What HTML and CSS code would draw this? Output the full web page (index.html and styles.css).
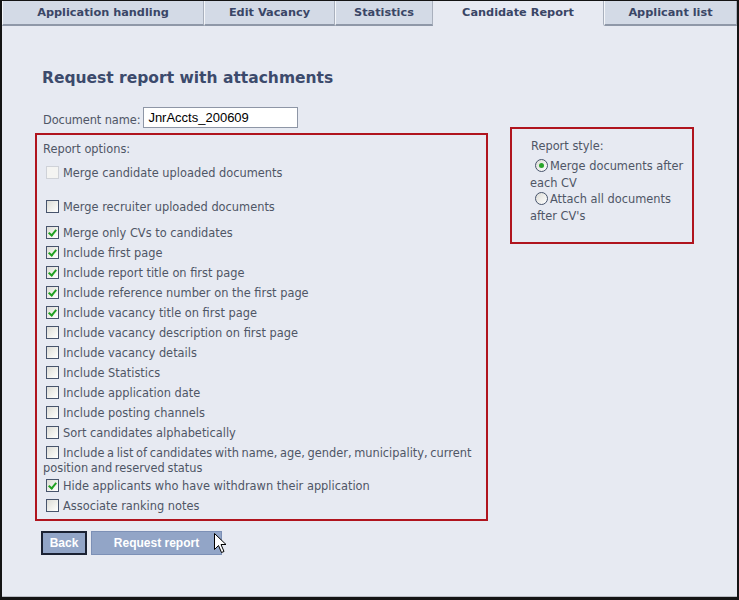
FILE: index.html
```html
<!DOCTYPE html>
<html>
<head>
<meta charset="utf-8">
<link rel="stylesheet" href="styles.css">
</head>
<body>
<div class="frame">
  <div class="tabs">
    <div class="tab t1">Application handling</div>
    <div class="tab t2">Edit Vacancy</div>
    <div class="tab t3">Statistics</div>
    <div class="tab t4 active">Candidate Report</div>
    <div class="tab t5">Applicant list</div>
  </div>
  <div class="content">
    <h1 class="title">Request report with attachments</h1>
    <div class="docrow">
      <span class="doclabel">Document name:</span>
      <span class="input">JnrAccts_200609</span>
    </div>
    <div class="panels">
      <div class="box options">
        <div class="boxlabel">Report options:</div>
        <div class="opt first"><span class="cb disabled"></span>Merge candidate uploaded documents</div>
        <div class="opt second"><span class="cb"></span>Merge recruiter uploaded documents</div>
        <div class="opt"><span class="cb on"></span>Merge only CVs to candidates</div>
        <div class="opt"><span class="cb on"></span>Include first page</div>
        <div class="opt"><span class="cb on"></span>Include report title on first page</div>
        <div class="opt"><span class="cb on"></span>Include reference number on the first page</div>
        <div class="opt"><span class="cb on"></span>Include vacancy title on first page</div>
        <div class="opt"><span class="cb"></span>Include vacancy description on first page</div>
        <div class="opt"><span class="cb"></span>Include vacancy details</div>
        <div class="opt"><span class="cb"></span>Include Statistics</div>
        <div class="opt"><span class="cb"></span>Include application date</div>
        <div class="opt"><span class="cb"></span>Include posting channels</div>
        <div class="opt"><span class="cb"></span>Sort candidates alphabetically</div>
        <div class="opt wrap"><span class="cb"></span>Include a list of candidates with name, age, gender, municipality, current position and reserved status</div>
        <div class="opt"><span class="cb on"></span>Hide applicants who have withdrawn their application</div>
        <div class="opt"><span class="cb"></span>Associate ranking notes</div>
      </div>
      <div class="box style">
        <div class="stylelabel">Report style:</div>
        <div class="radiorow"><span class="rb on"></span>Merge documents after each CV</div>
        <div class="radiorow"><span class="rb"></span>Attach all documents after CV's</div>
      </div>
    </div>
    <div class="buttons">
      <span class="btn back">Back</span>
      <span class="btn req">Request report
        <svg class="cursor" width="13" height="21" viewBox="0 0 13 21"><path d="M0.5 0.5 L0.5 16.5 L4.5 12.5 L7.5 19.5 L10 18.5 L7 11.5 L12 11.5 Z" fill="#fff" stroke="#000" stroke-width="1"/></svg>
      </span>
    </div>
  </div>
</div>
</body>
</html>
```
FILE: styles.css
```css
html, body { margin: 0; padding: 0; }
body { background: #e7eaf2; }
.frame {
  box-sizing: border-box;
  width: 739px; height: 600px;
  border: 2px solid #141414;
  border-top-width: 1px;
  border-bottom-width: 3px;
  background: #e7eaf2;
  position: relative;
  overflow: hidden;
  font-family: "DejaVu Sans", Verdana, sans-serif;
}
.frame::after {
  content: ""; position: absolute; left: 0; right: 0; bottom: 0;
  height: 1px; background: #b9bcc4;
}
.tabs { display: flex; height: 25px; }
.tab {
  box-sizing: border-box;
  height: 25px;
  background: #d3dae6;
  border-bottom: 2px solid #8f98a8;
  border-right: 1px solid #a9b0bd;
  border-left: 1px solid #f4f6fa;
  color: #3a4666;
  font-weight: bold;
  font-size: 11.3px;
  line-height: 23px;
  text-align: center;
}
.t1 { width: 202px; }
.t2 { width: 131px; }
.t3 { width: 98px; }
.t4 { width: 171px; }
.t5 { width: 133px; }
.tab.active { background: #e7eaf2; border-bottom-color: transparent; border-left: none; border-right: 1px solid #a9b0bd; }
.content { padding: 41px 0 0 33px; }
.title {
  margin: 0;
  font-size: 15.5px; font-weight: bold;
  color: #3c4a6c;
  line-height: 22px;
  padding-left: 7px;
}
.docrow { display: flex; align-items: center; margin-top: 18px; padding-left: 8px; }
.doclabel { font-size: 11.4px; color: #4f5666; margin-right: 3px; padding-top: 5px; letter-spacing: -0.1px; }
.input {
  box-sizing: border-box;
  width: 155px; height: 21px;
  background: #fff;
  border: 1px solid #8e96a6;
  font-family: "Liberation Sans", Arial, sans-serif;
  font-size: 13px;
  color: #000;
  line-height: 19px;
  padding-left: 4px;
}
.panels { display: flex; align-items: flex-start; margin-top: -1px; }
.box { border: 2px solid #b0141e; box-sizing: border-box; }
.options { width: 453px; margin-top: 6px; padding: 7px 0 3px 6px; }
.style { width: 184px; margin-left: 22px; padding: 9px 8px 18px 19px; }
.boxlabel { font-size: 11.4px; color: #4f5666; line-height: 15px; }
.opt { font-size: 11.4px; color: #4f5666; line-height: 15px; padding: 3px 0 2px 0; }
.opt.first { padding-top: 9px; padding-bottom: 16px; }
.opt.second { padding-bottom: 8px; }
.opt.wrap { padding-bottom: 0; word-spacing: -1px; }
.cb {
  display: inline-block; box-sizing: border-box;
  width: 13px; height: 13px;
  border: 1px solid #47546c;
  background: linear-gradient(135deg, #dcdcd6 0%, #f2f2ee 60%, #fff 100%);
  vertical-align: -2px;
  margin: 0 4px 0 3px;
  position: relative;
  word-spacing: 0;
}
.cb.disabled { border-color: #cfd2d8; background: #f4f4f2; }
.cb.on::after {
  content: ""; position: absolute;
  left: 3px; top: 1px; width: 3px; height: 6px;
  border: solid #21a121; border-width: 0 2px 2px 0;
  transform: rotate(40deg);
}
.stylelabel { font-size: 11.4px; color: #4f5666; line-height: 16px; margin-bottom: 4px; }
.radiorow { font-size: 11.4px; color: #4f5666; line-height: 16.5px; margin-left: -1px; }
.rb {
  display: inline-block; box-sizing: border-box;
  width: 13px; height: 13px; border-radius: 50%;
  border: 1px solid #47546c;
  background: linear-gradient(135deg, #dcdcd6, #fff);
  vertical-align: -2px;
  margin: 0 2px 0 5px;
  position: relative;
}
.rb.on::after {
  content: ""; position: absolute; left: 3px; top: 3px;
  width: 5px; height: 5px; border-radius: 50%;
  background: #2aa52a;
}
.buttons { display: flex; gap: 4px; margin-top: 10px; padding-left: 8px; margin-left: -2px; }
.btn {
  box-sizing: border-box;
  height: 24px;
  background: #92a5c7;
  color: #fff;
  font-family: "Liberation Sans", Arial, sans-serif;
  font-weight: bold;
  font-size: 12px;
  line-height: 22px;
  text-align: center;
  border: 1px solid #7c90b6;
  position: relative;
}
.back { width: 46px; border: 2px solid #1b2233; line-height: 20px; }
.req { width: 131px; }
.cursor { position: absolute; left: 122px; top: 1px; }
```
